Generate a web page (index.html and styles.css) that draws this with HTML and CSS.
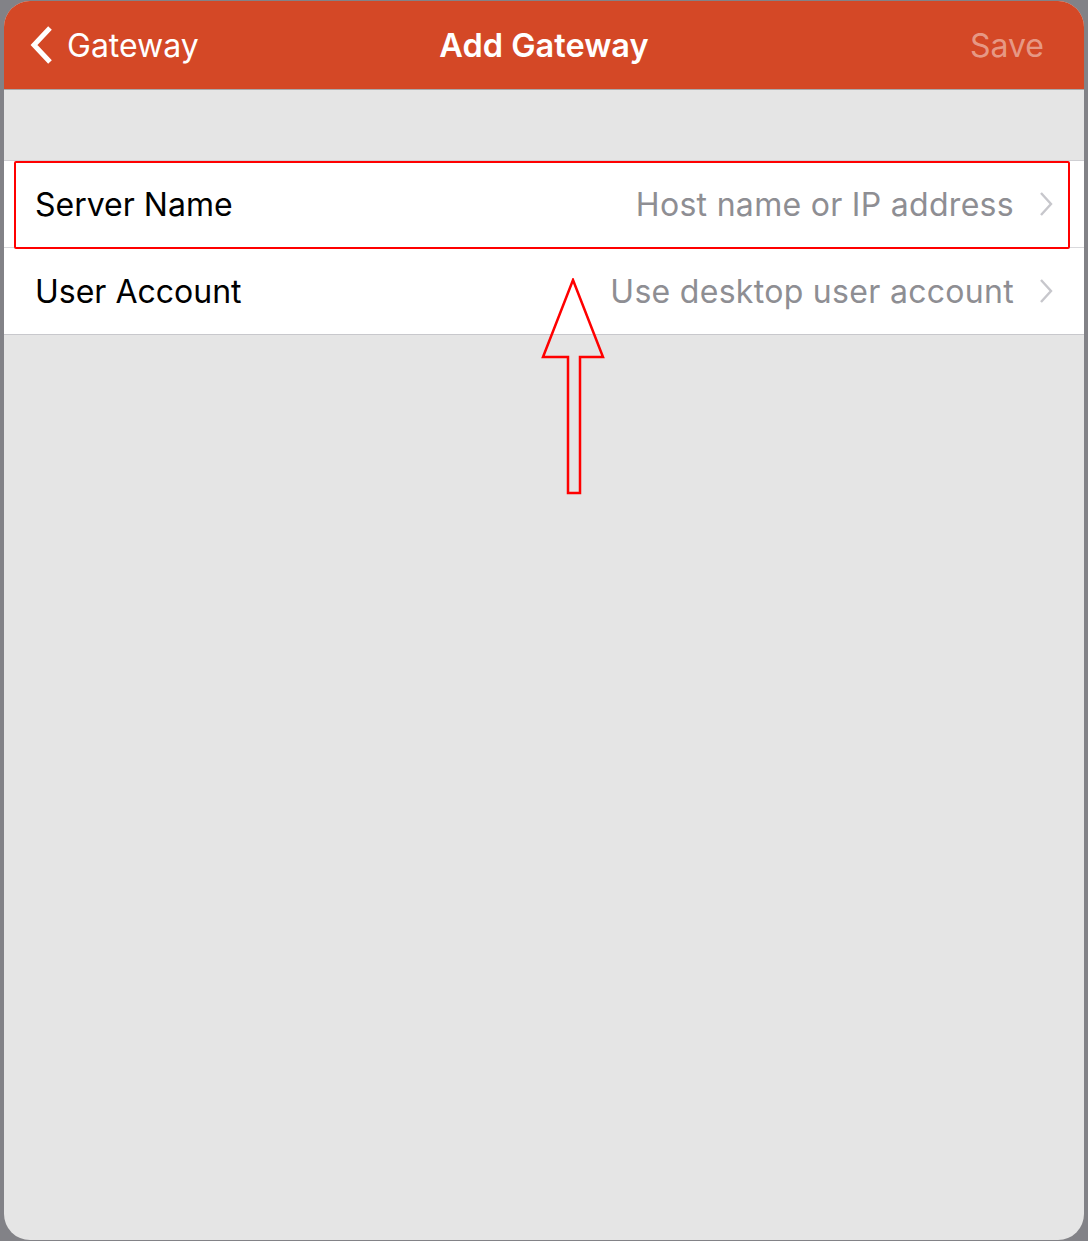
FILE: index.html
```html
<!DOCTYPE html>
<html lang="en">
<head>
    <meta charset="UTF-8">
    <title>Add Gateway</title>
    <link rel="stylesheet" href="styles.css">
</head>
<body>
    <div class="sheet">
        <!-- Nav bar -->
        <div class="navbar">
            <div class="nav-back">
                <svg class="back-chevron" width="28" height="40" viewBox="0 0 28 40">
                    <path d="M22 3 L6 20 L22 37" fill="none" stroke="#fff" stroke-width="5" stroke-linecap="butt"/>
                </svg>
                <span>Gateway</span>
            </div>
            <div class="nav-title">Add Gateway</div>
            <div class="nav-save">Save</div>
        </div>

        <!-- Settings rows -->
        <div class="group">
            <div class="row">
                <span class="row-label">Server Name</span>
                <span class="row-value">Host name or IP address</span>
                <svg class="row-chevron" width="16" height="26" viewBox="0 0 16 26"><path d="M3 2 L13 13 L3 24" fill="none" stroke="#c7c7cc" stroke-width="2.4"/></svg>
            </div>
            <div class="row">
                <span class="row-label">User Account</span>
                <span class="row-value">Use desktop user account</span>
                <svg class="row-chevron" width="16" height="26" viewBox="0 0 16 26"><path d="M3 2 L13 13 L3 24" fill="none" stroke="#c7c7cc" stroke-width="2.4"/></svg>
            </div>
        </div>

        <!-- annotation overlay -->
        <div class="highlight"></div>
        <svg class="arrow" width="70" height="220" viewBox="0 0 70 220">
            <path d="M35 2 L65 79 L42 79 L42 215 L30 215 L30 79 L5 79 Z" fill="none" stroke="#f00" stroke-width="2.5" stroke-linejoin="miter"/>
        </svg>
    </div>
</body>
</html>
```

FILE: styles.css
```css
body {
    margin: 0;
    background-color: #828287;
    font-family: Inter, "Liberation Sans", Arial, sans-serif;
    height: 1241px;
    overflow: hidden;
}
.sheet {
    position: relative;
    margin: 1px 4px 0 4px;
    height: 1239px;
    background-color: #e5e5e5;
    border-radius: 26px;
    overflow: hidden;
}
.navbar {
    height: 88px;
    background-color: #d44826;
    border-bottom: 1px solid #a9a9ab;
    display: flex;
    align-items: center;
    justify-content: space-between;
    padding: 0 40px 0 24px;
    color: #fff;
    font-size: 32px;
}
.nav-back {
    display: flex;
    align-items: center;
    gap: 11px;
    width: 300px;
}
.nav-title {
    font-weight: 600;
    font-size: 32.5px;
    margin-left: 16px;
}
.nav-save {
    width: 300px;
    text-align: right;
    color: rgba(255, 255, 255, 0.45);
}
.group {
    margin-top: 70px;
    background-color: #fff;
    border-top: 1px solid #cfcfd3;
    border-bottom: 1px solid #c8c8cc;
}
.row {
    height: 86px;
    display: flex;
    align-items: center;
    padding: 0 30px 0 31px;
    font-size: 32px;
}
.row + .row {
    border-top: 1px solid #d9d9dc;
}
.row-label {
    color: #000;
    flex: 1;
}
.row-value {
    color: #8e8e93;
    margin-right: 24px;
    letter-spacing: 0.3px;
}
.highlight {
    position: absolute;
    left: 10px;
    top: 160px;
    width: 1052px;
    height: 84px;
    border: 2.5px solid #f00;
    border-radius: 2px;
}
.arrow {
    position: absolute;
    left: 534px;
    top: 277px;
}
```
